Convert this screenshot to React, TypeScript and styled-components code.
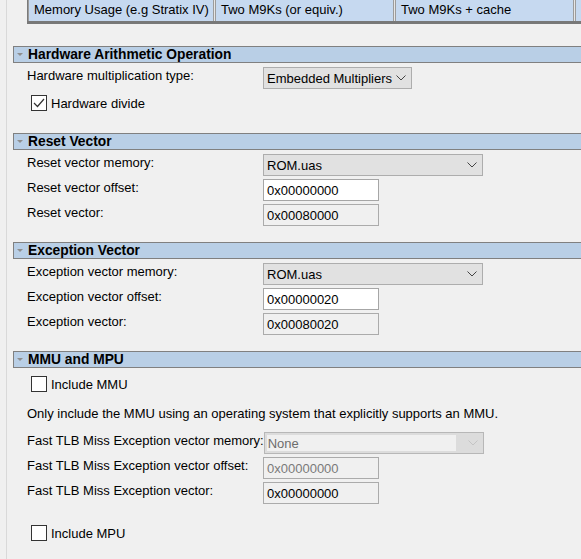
import * as React from 'react';
import styled, { createGlobalStyle } from 'styled-components';

const GlobalStyle = createGlobalStyle`
  html, body {
    margin: 0;
    padding: 0;
    background: #f0f0f0;
  }
  body {
    font-family: 'Liberation Sans', Arial, sans-serif;
    font-size: 13px;
    color: #000;
  }
`;

const Page = styled.div`
  margin-left: 6px;
  border-left: 1px solid #d9d9d9;
  height: 559px;
  overflow: hidden;
  display: flex;
  flex-direction: column;
`;

const Table = styled.div`
  margin-left: 20px;
  display: flex;
  height: 21px;
  border-left: 1px solid #7a7a7a;
  border-bottom: 3px solid #787878;
  background: #e6e6e6;
  white-space: nowrap;
`;

const Cell = styled.div<{ $w: number }>`
  flex: 0 0 ${(p) => p.$w}px;
  box-sizing: border-box;
  background: #c6d9f0;
  border: 1px solid #9c9c9c;
  border-top: none;
  border-bottom: none;
  margin-right: 1px;
  padding-left: 5px;
  line-height: 19px;
  overflow: hidden;
`;

const Section = styled.section`
  display: flex;
  flex-direction: column;
`;

const Header = styled.div<{ $mt: number }>`
  margin-top: ${(p) => p.$mt}px;
  margin-left: 6px;
  height: 15px;
  display: flex;
  align-items: center;
  gap: 5px;
  padding-left: 3px;
  background: #b9cfe6;
  border-top: 1px solid #808080;
  border-bottom: 1px solid #808080;
  border-left: 1px solid #808080;
  font-weight: bold;
  font-size: 13.8px;
  white-space: nowrap;
`;

const Triangle = styled.span`
  width: 0;
  height: 0;
  border-left: 3px solid transparent;
  border-right: 3px solid transparent;
  border-top: 3px solid #8e8e8e;
`;

const Body = styled.div`
  display: flex;
  flex-direction: column;
  padding: 4px 0 0 20px;
`;

const Row = styled.div<{ $mt?: number }>`
  display: flex;
  align-items: center;
  height: 22px;
  margin-top: ${(p) => p.$mt ?? 3}px;
  &:first-child {
    margin-top: ${(p) => p.$mt ?? 0}px;
  }
`;

const Label = styled.span`
  flex: 0 0 236px;
  padding-bottom: 5px;
  white-space: nowrap;
`;

const Combo = styled.div<{ $w: number; $disabled?: boolean }>`
  width: ${(p) => p.$w}px;
  height: 22px;
  box-sizing: border-box;
  display: flex;
  align-items: center;
  justify-content: space-between;
  padding: 0 5px 0 3px;
  background: ${(p) => (p.$disabled ? '#dcdcdc' : '#e1e1e1')};
  border: 1px solid ${(p) => (p.$disabled ? '#b7b7b7' : '#adadad')};
  color: ${(p) => (p.$disabled ? '#6d6d6d' : '#000')};
`;

const ComboValue = styled.span<{ $disabled?: boolean }>`
  flex: ${(p) => (p.$disabled ? '1' : '0 1 auto')};
  align-self: stretch;
  display: flex;
  align-items: center;
  margin: ${(p) => (p.$disabled ? '2px 12px 2px -1px' : '0')};
  padding-left: ${(p) => (p.$disabled ? '1px' : '0')};
  background: ${(p) => (p.$disabled ? '#f0f0f0' : 'transparent')};
`;

const TextField = styled.div<{ $readOnly?: boolean; $muted?: boolean }>`
  width: 116px;
  height: 22px;
  box-sizing: border-box;
  display: flex;
  align-items: center;
  padding-left: 3px;
  background: ${(p) => (p.$readOnly ? '#f0f0f0' : '#fff')};
  border: 1px solid ${(p) => (p.$readOnly ? '#ababab' : '#a6a6a6')};
  color: ${(p) => (p.$muted ? '#7a7a7a' : '#000')};
`;

const CheckRow = styled.label<{ $mt: number }>`
  display: flex;
  align-items: center;
  gap: 4px;
  height: 16px;
  margin-top: ${(p) => p.$mt}px;
  margin-left: 4px;
`;

const Box = styled.span`
  width: 16px;
  height: 16px;
  box-sizing: border-box;
  border: 1px solid #333;
  background: #fff;
  display: flex;
  align-items: center;
  justify-content: center;
`;

const Note = styled.div`
  margin-top: 14px;
  line-height: 16px;
  white-space: nowrap;
`;

const Chevron = ({ color }: { color: string }) => (
  <svg width="10" height="6" viewBox="0 0 10 6">
    <path d="M0.5 0.5 L5 5 L9.5 0.5" fill="none" stroke={color} strokeWidth="1" />
  </svg>
);

const Check = ({ checked }: { checked?: boolean }) => (
  <Box>
    {checked && (
      <svg width="14" height="14" viewBox="0 0 14 14">
        <path d="M2 7 L5.5 10.5 L12 3" fill="none" stroke="#333" strokeWidth="1.2" />
      </svg>
    )}
  </Box>
);

const App = () => (
  <>
    <GlobalStyle />
    <Page>
      <Table>
        <Cell $w={186}>Memory Usage (e.g Stratix IV)</Cell>
        <Cell $w={179}>Two M9Ks (or equiv.)</Cell>
        <Cell $w={179}>Two M9Ks + cache</Cell>
        <Cell $w={60}>Two M9Ks + cache</Cell>
      </Table>

      <Section>
        <Header $mt={22}>
          <Triangle />
          Hardware Arithmetic Operation
        </Header>
        <Body>
          <Row>
            <Label>Hardware multiplication type:</Label>
            <Combo $w={149}>
              <ComboValue>Embedded Multipliers</ComboValue>
              <Chevron color="#444" />
            </Combo>
          </Row>
          <CheckRow $mt={6}>
            <Check checked />
            Hardware divide
          </CheckRow>
        </Body>
      </Section>

      <Section>
        <Header $mt={22}>
          <Triangle />
          Reset Vector
        </Header>
        <Body>
          <Row>
            <Label>Reset vector memory:</Label>
            <Combo $w={220}>
              <ComboValue>ROM.uas</ComboValue>
              <Chevron color="#444" />
            </Combo>
          </Row>
          <Row>
            <Label>Reset vector offset:</Label>
            <TextField>0x00000000</TextField>
          </Row>
          <Row>
            <Label>Reset vector:</Label>
            <TextField $readOnly>0x00080000</TextField>
          </Row>
        </Body>
      </Section>

      <Section>
        <Header $mt={16}>
          <Triangle />
          Exception Vector
        </Header>
        <Body>
          <Row>
            <Label>Exception vector memory:</Label>
            <Combo $w={220}>
              <ComboValue>ROM.uas</ComboValue>
              <Chevron color="#444" />
            </Combo>
          </Row>
          <Row>
            <Label>Exception vector offset:</Label>
            <TextField>0x00000020</TextField>
          </Row>
          <Row>
            <Label>Exception vector:</Label>
            <TextField $readOnly>0x00080020</TextField>
          </Row>
        </Body>
      </Section>

      <Section>
        <Header $mt={16}>
          <Triangle />
          MMU and MPU
        </Header>
        <Body>
          <CheckRow $mt={4}>
            <Check />
            Include MMU
          </CheckRow>
          <Note>Only include the MMU using an operating system that explicitly supports an MMU.</Note>
          <Row $mt={10}>
            <Label>Fast TLB Miss Exception vector memory:</Label>
            <Combo $w={220} $disabled>
              <ComboValue $disabled>None</ComboValue>
              <Chevron color="#c4c4c4" />
            </Combo>
          </Row>
          <Row>
            <Label>Fast TLB Miss Exception vector offset:</Label>
            <TextField $readOnly $muted>0x00000000</TextField>
          </Row>
          <Row>
            <Label>Fast TLB Miss Exception vector:</Label>
            <TextField $readOnly>0x00000000</TextField>
          </Row>
          <CheckRow $mt={21}>
            <Check />
            Include MPU
          </CheckRow>
        </Body>
      </Section>
    </Page>
  </>
);

export default App;
